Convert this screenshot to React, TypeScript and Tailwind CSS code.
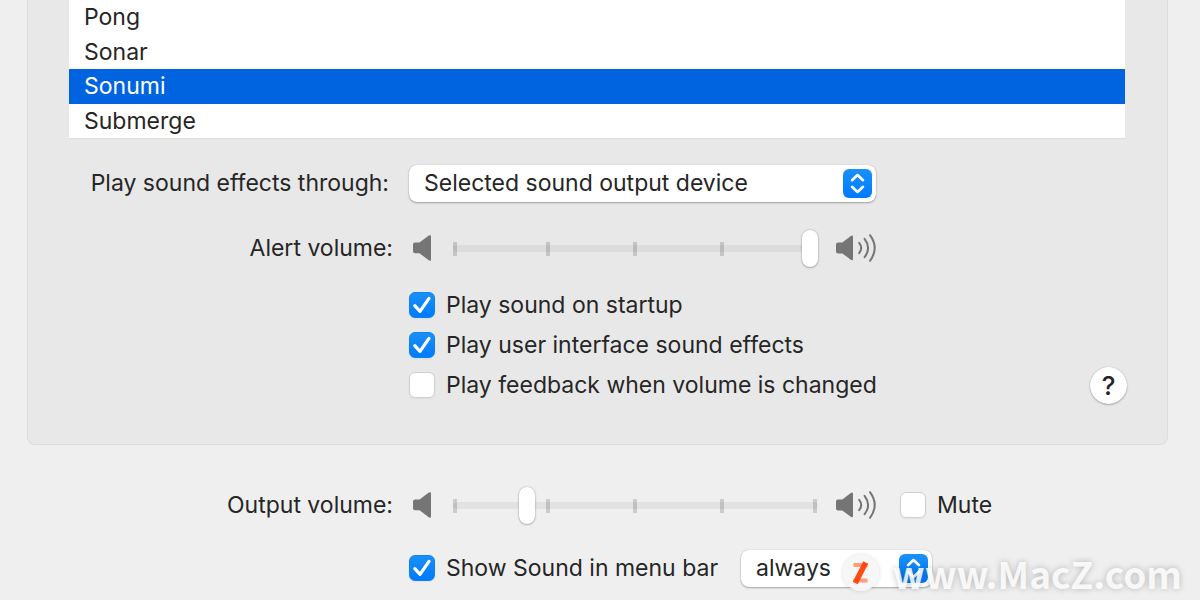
import React, { useState } from 'react';

const sounds = ['Pong', 'Sonar', 'Sonumi', 'Submerge'];

interface CheckboxProps {
  label: string;
  defaultChecked?: boolean;
}

const Checkbox: React.FC<CheckboxProps> = ({ label, defaultChecked }) => {
  return (
    <label className="flex items-center gap-[11px] h-[26px] whitespace-nowrap">
      <span className="relative w-[26px] h-[26px] shrink-0">
        <input
          type="checkbox"
          defaultChecked={defaultChecked}
          className="peer block appearance-none w-full h-full rounded-md bg-white border border-[#cfcfcf] shadow-xs checked:border-[#0a84f5] checked:bg-linear-to-b checked:from-[#1a8ff5] checked:to-[#007aff]"
        />
        <svg
          viewBox="0 0 26 26"
          className="hidden peer-checked:block absolute inset-0 w-full h-full pointer-events-none"
          fill="none"
          stroke="#fff"
          strokeWidth="3.2"
          strokeLinecap="round"
          strokeLinejoin="round"
        >
          <path d="M5.8 13.6 L11 19.4 L20 6.4" />
        </svg>
      </span>
      <span>{label}</span>
    </label>
  );
};

interface PopUpProps {
  id?: string;
  label?: string;
  options: string[];
  className: string;
}

const PopUp: React.FC<PopUpProps> = ({ id, label, options, className }) => {
  return (
    <div className={`relative h-[37px] ${className}`}>
      <select
        id={id}
        aria-label={label}
        className="block appearance-none w-full h-full rounded-lg bg-white pl-[15px] pr-10 pb-px shadow-[0_0_1px_rgba(0,0,0,0.25),0_1px_2px_rgba(0,0,0,0.3)]"
      >
        {options.map((option) => (
          <option key={option}>{option}</option>
        ))}
      </select>
      <span className="absolute right-1 top-1 w-[29px] h-[29px] rounded-md bg-linear-to-b from-[#1a90f8] to-[#007aff] pointer-events-none">
        <svg
          viewBox="0 0 29 29"
          fill="none"
          stroke="#fff"
          strokeWidth="2.6"
          strokeLinecap="round"
          strokeLinejoin="round"
        >
          <path d="M9 11.2 L14.5 6 L20 11.2 M9 17.8 L14.5 23 L20 17.8" />
        </svg>
      </span>
    </div>
  );
};

const SpeakerLow = () => (
  <svg viewBox="0 0 18 28" className="w-[18px] h-7 shrink-0" fill="#757575">
    <path d="M2 7.5 H6.5 L15.8 0.6 Q18 -0.6 18 1.6 V24.6 Q18 26.6 15.8 25.3 L6.5 18.3 H2 Q0 18.3 0 16.3 V9.5 Q0 7.5 2 7.5 Z" />
  </svg>
);

const SpeakerHigh = () => (
  <svg viewBox="0 0 40 30" className="w-10 h-[30px] shrink-0" fill="none">
    <path
      fill="#757575"
      d="M2 8.6 H6.3 L14.8 1.9 Q17 0.7 17 2.9 V25 Q17 27 14.8 25.8 L6.3 19.4 H2 Q0 19.4 0 17.4 V10.6 Q0 8.6 2 8.6 Z"
    />
    <g stroke="#757575" strokeWidth="2" strokeLinecap="round">
      <path d="M23.2 8.9 Q27.2 14 23.2 19.1" />
      <path d="M28.6 4.8 Q35.6 14 28.6 23.2" />
      <path d="M34 1.2 Q43.4 14 34 26.8" />
    </g>
  </svg>
);

interface VolumeSliderProps {
  id: string;
  initial: number;
}

const VolumeSlider: React.FC<VolumeSliderProps> = ({ id, initial }) => {
  const [value, setValue] = useState(initial);

  return (
    <div className="flex items-center w-[463px] shrink-0">
      <SpeakerLow />
      <div className="relative flex-1 h-[37px] ml-[22px] mr-[18px]">
        <div className="absolute inset-0 flex items-center">
          <div className="w-full h-[7px] rounded-full bg-black/5" />
        </div>
        <div className="absolute inset-y-0 left-0 right-px flex items-center">
          <div className="h-3.5 flex-[93] border-l-4 border-black/15" />
          <div className="h-3.5 flex-[87] border-l-4 border-black/15" />
          <div className="h-3.5 flex-[87] border-l-4 border-black/15" />
          <div className="h-3.5 flex-[93] border-x-4 border-black/15" />
        </div>
        <input
          id={id}
          type="range"
          min={0}
          max={100}
          value={value}
          onChange={(e) => setValue(Number(e.target.value))}
          className="relative block appearance-none w-full h-full bg-transparent [&::-webkit-slider-thumb]:appearance-none [&::-webkit-slider-thumb]:w-4 [&::-webkit-slider-thumb]:h-[37px] [&::-webkit-slider-thumb]:rounded-full [&::-webkit-slider-thumb]:bg-white [&::-webkit-slider-thumb]:shadow-[0_0_2px_rgba(0,0,0,0.3),0_1px_2px_rgba(0,0,0,0.2)]"
        />
      </div>
      <SpeakerHigh />
    </div>
  );
};

const Watermark = () => (
  <div className="absolute right-[18px] bottom-0 h-[54px] flex items-center gap-3.5 pointer-events-none">
    <span className="w-9 h-9 rounded-full bg-[#f7f7f7]/95 shadow-[0_0_4px_rgba(0,0,0,0.15)]">
      <svg viewBox="0 0 36 36">
        <rect x="10.5" y="8" width="14" height="4" fill="#ff9c80" />
        <rect x="10.5" y="23.5" width="14" height="4" fill="#ff9c80" />
        <line x1="21.5" y1="10" x2="13.5" y2="25.5" stroke="#ff4a12" strokeWidth="5.5" strokeLinecap="square" />
      </svg>
    </span>
    <span className="font-['Noto_Sans_CJK_SC','Noto_Sans',sans-serif] font-bold text-[37px] leading-none text-white/85 [text-shadow:0_0_6px_rgba(0,0,0,0.25)]">
      www.MacZ.com
    </span>
  </div>
);

const App: React.FC = () => {
  const [selected, setSelected] = useState('Sonumi');

  return (
    <div className="relative min-h-screen overflow-hidden bg-[#efefef] font-[Inter,'Liberation_Sans',sans-serif] text-[23px] leading-7 text-[#262626]">
      <main className="ml-[27px] mr-8 rounded-b-lg border border-t-0 border-[#dcdcdc] bg-[#e8e8e8] pl-[41px] pr-10 pb-10">
        <ul role="listbox" aria-label="Alert sound" className="grid auto-rows-fr h-[139px] mr-0.5 bg-white border-b border-[#dedede]">
          {sounds.map((sound) => (
            <li
              key={sound}
              role="option"
              aria-selected={sound === selected}
              onClick={() => setSelected(sound)}
              className={`flex items-center px-[15px] ${sound === selected ? 'bg-[#0064e1] text-white' : ''}`}
            >
              {sound}
            </li>
          ))}
        </ul>

        <div className="flex items-center gap-5 mt-[26px]">
          <label htmlFor="device" className="w-80 pb-0.5 text-right whitespace-nowrap">
            Play sound effects through:
          </label>
          <PopUp id="device" className="w-[467px]" options={['Selected sound output device']} />
        </div>

        <div className="flex items-center gap-5 mt-7">
          <label htmlFor="alert" className="w-[324px] pb-0.5 text-right">
            Alert volume:
          </label>
          <VolumeSlider id="alert" initial={100} />
        </div>

        <div className="flex items-end justify-between mt-[25px] pl-[340px]">
          <div className="flex flex-col gap-3.5 pb-1.5">
            <Checkbox label="Play sound on startup" defaultChecked />
            <Checkbox label="Play user interface sound effects" defaultChecked />
            <Checkbox label="Play feedback when volume is changed" />
          </div>
          <button
            type="button"
            className="w-[37px] h-[37px] rounded-full bg-white font-medium text-[26px] shadow-[0_0_1px_rgba(0,0,0,0.3),0_1px_2px_rgba(0,0,0,0.25)]"
          >
            ?
          </button>
        </div>
      </main>

      <footer className="pl-[69px]">
        <div className="flex items-center gap-5 mt-[42px]">
          <label htmlFor="output" className="w-[324px] pb-0.5 text-right">
            Output volume:
          </label>
          <VolumeSlider id="output" initial={19} />
          <div className="ml-1 pb-0.5">
            <Checkbox label="Mute" />
          </div>
        </div>
        <div className="flex items-center gap-[23px] mt-[26px] pl-[340px]">
          <div className="pb-0.5">
            <Checkbox label="Show Sound in menu bar" defaultChecked />
          </div>
          <PopUp label="When to show Sound" className="w-[191px]" options={['always', 'when active']} />
        </div>
      </footer>

      <Watermark />
    </div>
  );
};

export default App;
